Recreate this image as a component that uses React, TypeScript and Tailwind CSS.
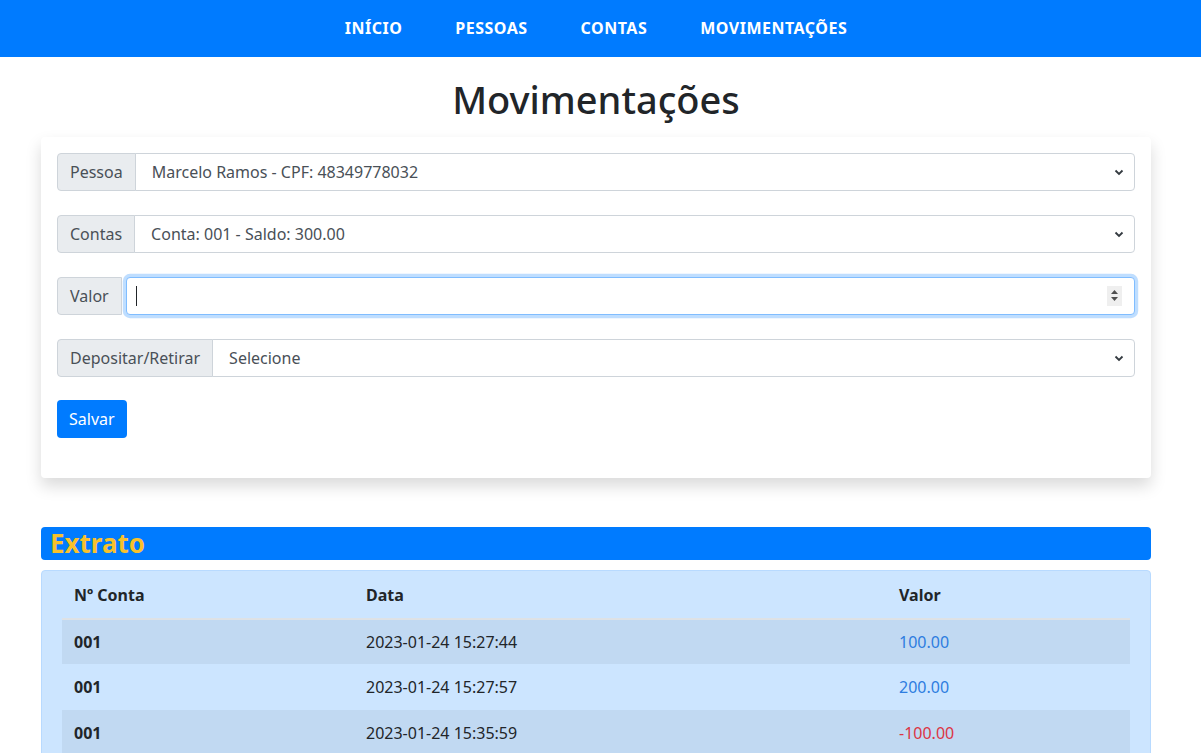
import React from 'react';

const font = { fontFamily: '"Noto Sans", "Open Sans", sans-serif' };

function Chevron() {
  return (
    <svg width="10" height="8" viewBox="0 0 10 8" className="absolute right-[10px] top-1/2 -translate-y-1/2">
      <path d="M1.5 2.5 L5 6 L8.5 2.5" fill="none" stroke="#343a40" strokeWidth="1.8" />
    </svg>
  );
}

function SelectRow({ label, value }: { label: string; value: string }) {
  return (
    <div className="flex h-[38px] mb-6">
      <div className="flex items-center px-3 bg-[#e9ecef] border border-[#ced4da] rounded-l-[4px] text-[#495057]">
        {label}
      </div>
      <div className="relative flex-1 flex items-center -ml-px pl-4 border border-[#ced4da] rounded-r-[4px] bg-white text-[#495057]">
        {value}
        <Chevron />
      </div>
    </div>
  );
}

const rows = [
  { conta: '001', data: '2023-01-24 15:27:44', valor: '100.00', neg: false },
  { conta: '001', data: '2023-01-24 15:27:57', valor: '200.00', neg: false },
  { conta: '001', data: '2023-01-24 15:35:59', valor: '-100.00', neg: true },
];

export default function App() {
  return (
    <div className="min-h-screen bg-white text-[16px] text-[#212529]" style={font}>
      <nav className="bg-[#007bff] h-[57px]">
        <div className="w-[1192px] h-full flex items-center justify-center gap-[53px] text-white font-bold tracking-[0.5px] pb-px">
          <span>INÍCIO</span>
          <span>PESSOAS</span>
          <span>CONTAS</span>
          <span>MOVIMENTAÇÕES</span>
        </div>
      </nav>

      <div className="ml-[41px] w-[1110px]">
        <h1 className="text-center text-[38px] font-medium leading-[1.2] pt-[20px] pb-[14px]">Movimentações</h1>

        <div className="bg-white rounded-[4px] shadow-[0_0.5rem_1rem_rgba(0,0,0,0.15)] p-4 pb-10">
          <SelectRow label="Pessoa" value="Marcelo Ramos - CPF: 48349778032" />
          <SelectRow label="Contas" value="Conta: 001 - Saldo: 300.00" />
          <div className="flex h-[38px] mb-6">
            <div className="flex items-center px-3 bg-[#e9ecef] border border-[#ced4da] rounded-l-[4px] text-[#495057]">
              Valor
            </div>
            <div className="relative flex-1 flex items-center ml-[4px] pl-[9px] border border-[#80bdff] rounded-[4px] bg-white shadow-[0_0_0_0.2rem_rgba(0,123,255,0.25)]">
              <span className="w-px h-[20px] bg-[#212529]" />
              <div className="absolute right-[12px] top-1/2 -translate-y-1/2 w-[15px] h-[20px] bg-[#efefef] flex flex-col items-center justify-center gap-[3px]">
                <svg width="7" height="4" viewBox="0 0 7 4"><path d="M0 4 L3.5 0 L7 4 Z" fill="#505050" /></svg>
                <svg width="7" height="4" viewBox="0 0 7 4"><path d="M0 0 L3.5 4 L7 0 Z" fill="#505050" /></svg>
              </div>
            </div>
          </div>
          <SelectRow label="Depositar/Retirar" value="Selecione" />
          <button className="bg-[#007bff] text-white rounded-[4px] h-[38px] px-3 -mt-px">Salvar</button>
        </div>

        <div className="mt-[49px] h-[33px] bg-[#007bff] rounded-[4px] flex items-center px-[9px]">
          <span className="text-[#f7c12c] font-bold text-[26px] leading-none">Extrato</span>
        </div>

        <div className="mt-[10px] bg-[#cce5ff] border border-[#b8daff] rounded-[4px] px-5 pt-px">
          <div className="grid grid-cols-[292px_533px_1fr] h-[46px] items-center font-bold">
            <div className="px-3">Nº Conta</div>
            <div className="px-3">Data</div>
            <div className="px-3">Valor</div>
          </div>
          {rows.map((r, i) => (
            <div
              key={i}
              className={`grid grid-cols-[292px_533px_1fr] h-[46px] items-center ${i === 0 ? 'border-t-2 border-[#dee2e6]' : ''} ${i % 2 === 0 ? 'bg-[#c1d9f2]' : ''}`}
            >
              <div className="px-3 font-bold">{r.conta}</div>
              <div className="px-3">{r.data}</div>
              <div className={`px-3 ${r.neg ? 'text-[#dc3545]' : 'text-[#2e7de0]'}`}>{r.valor}</div>
            </div>
          ))}
          <div className="h-5" />
        </div>
      </div>
    </div>
  );
}
